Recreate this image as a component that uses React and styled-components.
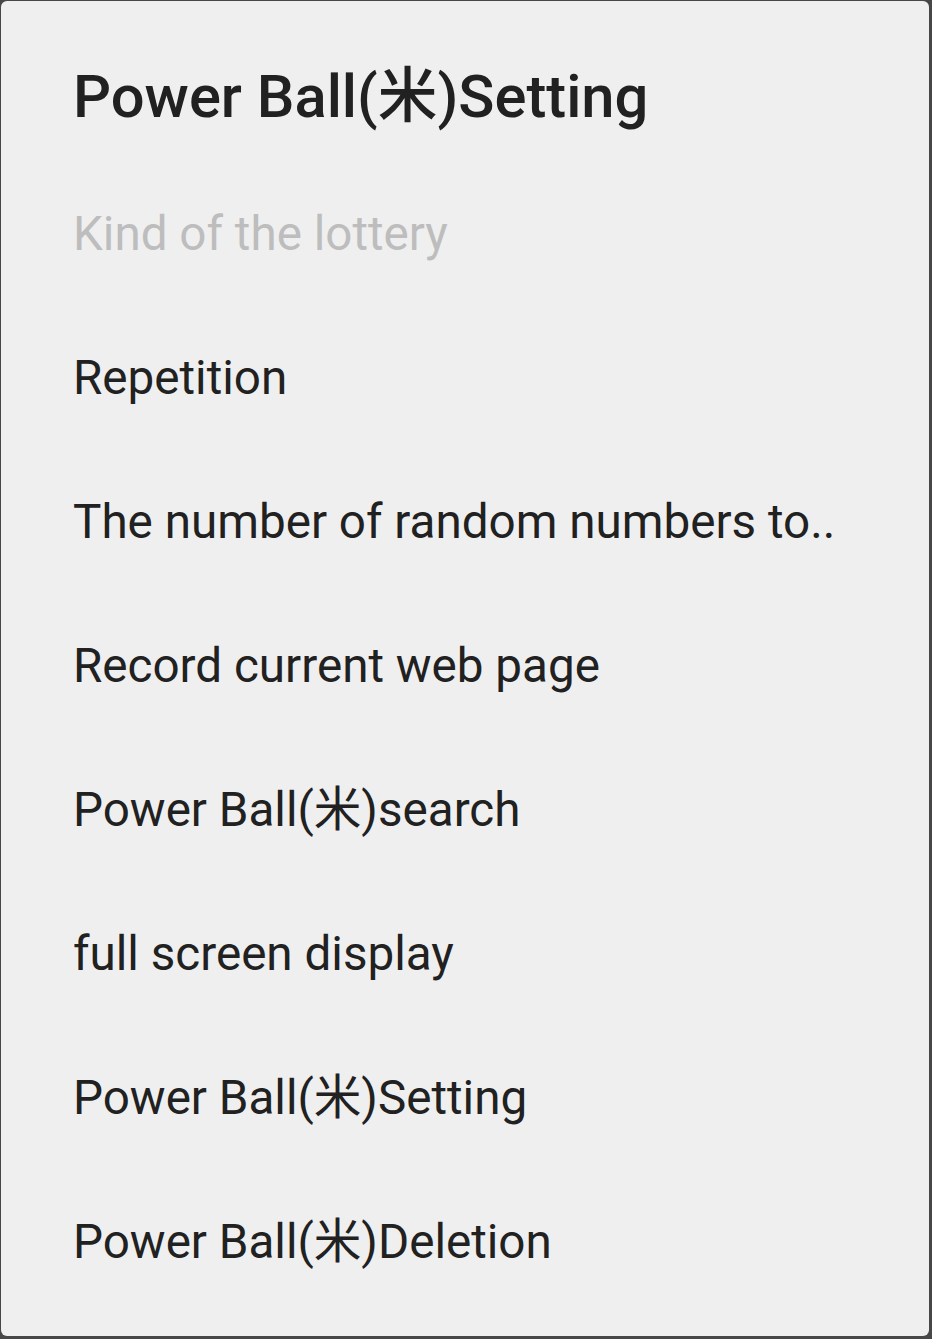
import React from 'react';
import styled, { createGlobalStyle } from 'styled-components';

const GlobalStyle = createGlobalStyle`
  html, body {
    margin: 0;
    padding: 0;
    background: #474747;
  }
  body {
    font-family: Roboto, "Noto Sans CJK JP", sans-serif;
  }
`;

const items = [
  { label: 'Kind of the lottery', disabled: true },
  { label: 'Repetition' },
  { label: 'The number of random numbers to..' },
  { label: 'Record current web page' },
  { label: 'Power Ball(米)search' },
  { label: 'full screen display' },
  { label: 'Power Ball(米)Setting' },
  { label: 'Power Ball(米)Deletion' },
];

const Dialog = styled.div`
  display: flex;
  flex-direction: column;
  box-sizing: border-box;
  margin: 1px 3px 0 1px;
  height: 1335px;
  padding-bottom: 22px;
  background: #efefef;
  border-radius: 6px;
`;

const Title = styled.h1`
  display: flex;
  align-items: center;
  height: 161px;
  margin: 0;
  padding: 30px 0 0 72px;
  box-sizing: border-box;
  font-size: 59.7px;
  line-height: 70px;
  font-weight: 500;
  color: #212121;
`;

const Row = styled.div`
  display: flex;
  align-items: center;
  height: 144px;
  padding-left: 72px;
  font-size: 47.6px;
  line-height: 56px;
  color: ${p => (p.$disabled ? '#bdbdbd' : '#212121')};
  white-space: nowrap;
`;

export default function App() {
  return (
    <>
      <GlobalStyle />
      <Dialog>
        <Title>Power Ball(米)Setting</Title>
        {items.map(it => (
          <Row key={it.label} $disabled={it.disabled}>{it.label}</Row>
        ))}
      </Dialog>
    </>
  );
}
